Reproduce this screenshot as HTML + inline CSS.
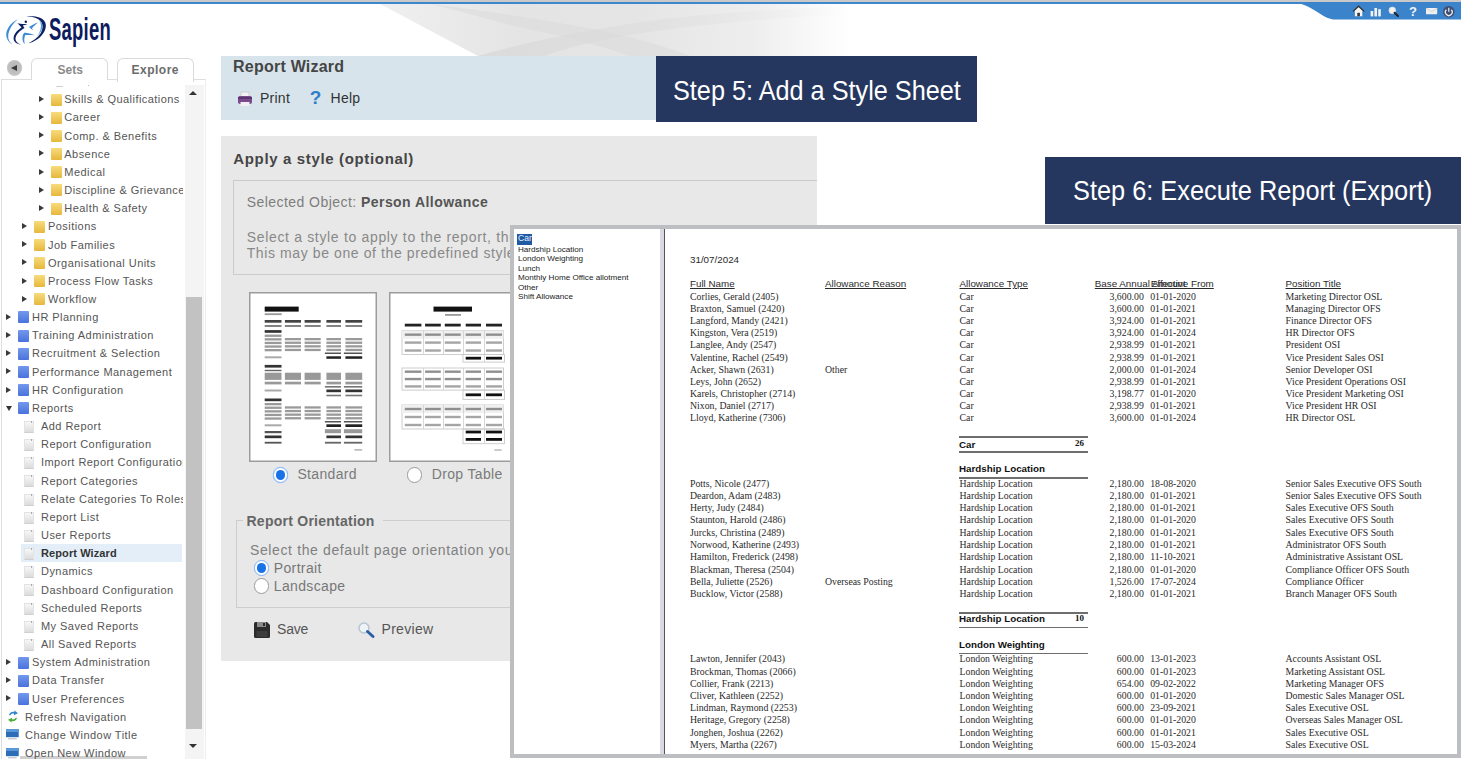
<!DOCTYPE html><html><head><meta charset="utf-8"><style>
*{margin:0;padding:0;box-sizing:border-box}
html,body{width:1461px;height:759px;overflow:hidden;background:#fff;position:relative;font-family:"Liberation Sans",sans-serif}
.a{position:absolute}
.nw{white-space:nowrap}
#topgray{left:0;top:0;width:1461px;height:2px;background:#c9c9c9}
#topblue{left:0;top:2px;width:1461px;height:1.5px;background:#3e87cd}
#swoosh{left:380px;top:3px;width:460px;height:52px;background:linear-gradient(90deg,rgba(255,255,255,0) 0%,#e9e9e9 25%,#e0e0e0 50%,#e8e8e8 72%,rgba(255,255,255,0) 100%)}
#navpanel{left:1px;top:79px;width:204.5px;height:690px;border:1.3px solid #dedede;border-right-color:#ececec;background:#fff}
.tab{top:57.5px;height:23px;border:1.3px solid #dadada;border-bottom:none;border-radius:6px 6px 0 0;background:#fff}
#track{left:184.5px;top:85px;width:19.5px;height:674px;background:#f4f4f4}
#thumb{left:185.5px;top:297px;width:16.5px;height:432px;background:#c2c2c2}
.tr{font-size:11px;color:#555;letter-spacing:.45px;height:18px;line-height:18px;white-space:nowrap;overflow:hidden}
.arr{width:0;height:0;border-left:5px solid #3a3a3a;border-top:3px solid transparent;border-bottom:3px solid transparent}
.arrd{width:0;height:0;border-top:5px solid #333;border-left:3px solid transparent;border-right:3px solid transparent}
.fold{width:11px;height:12px;border-radius:1px}
.fy{background:linear-gradient(#f8db7c,#e6b83c)}
.fb{background:linear-gradient(#7398ee,#4a72dc)}
.doc{width:9.5px;height:12px;background:linear-gradient(#f7f7f7,#dcdcdc);border:.8px solid #e3e3e3;border-bottom-color:#cfcfcf}
#wizhead{left:221px;top:56px;width:596px;height:64.3px;background:#d7e4eb}
#applyp{left:221px;top:136px;width:596px;height:525px;background:#e8e8e8}
.banner{background:#26375f;color:#fff}
.rp{font-family:"Liberation Serif",serif;font-size:9.8px;color:#2a2a2a;white-space:nowrap;line-height:12px;height:12px}
.rs{font-family:"Liberation Sans",sans-serif;font-size:9.8px;color:#2a2a2a;white-space:nowrap;line-height:12px;height:12px}
.li{font-size:8.1px;color:#222;white-space:nowrap;line-height:9.4px}
</style></head><body>
<div class="a" id="topgray"></div><div class="a" id="topblue"></div>
<svg class="a" style="left:370px;top:3.5px" width="480" height="52" viewBox="370 3.5 480 52">
<defs><linearGradient id="sw" x1="0" x2="1" y1="0" y2="0"><stop offset="0" stop-color="#f0f0f0"/><stop offset=".3" stop-color="#e4e4e4"/><stop offset=".55" stop-color="#e5e5e5"/><stop offset=".8" stop-color="#eeeeee"/><stop offset="1" stop-color="#fff"/></linearGradient>
<linearGradient id="swr" x1="0" x2="1" y1="0" y2="0"><stop offset="0" stop-color="#d8d8d8" stop-opacity=".8"/><stop offset=".5" stop-color="#dcdcdc" stop-opacity=".5"/><stop offset="1" stop-color="#e6e6e6" stop-opacity="0"/></linearGradient></defs>
<path d="M380 3.5H850V55.5H478Z" fill="url(#sw)"/>
<path d="M478 55.5C540 38 600 27 660 19C720 12 790 8 850 6V14C790 16 720 22 660 30C610 37 570 46 545 55.5Z" fill="url(#swr)"/>
<path d="M430 3.5C500 12 560 22 610 32C640 39 665 46 690 55.5H630C600 45 570 37 530 29C490 20 460 10 430 3.5Z" fill="#dadada" opacity=".5"/>
</svg>
<svg class="a" style="left:0;top:10px" width="50" height="40" viewBox="0 10 50 40">
<path d="M17.8 19.3C10.5 23 5.2 30 6.4 36.5C7 40 9.5 43 12.6 44.6C9.6 42.5 8 39.5 8.2 36C8.6 29.5 12.8 23.6 17.8 19.3Z" fill="#3d8bd8"/>
<path d="M26.4 16.6C33 15.6 42 16.5 45 22C47.6 27 44 35 37 39.5C34 41.5 31 42.7 28.5 43.3C33 41 38 37.5 40.8 33C44 27.5 43 21.5 37.5 18.8C34.5 17.3 30.5 16.7 26.4 16.6Z" fill="#0e1f63"/>
<path d="M38.5 19.5C43 22 43.5 28 40 33C37.5 36.8 33 40.3 28.5 43.3C33.5 40.5 37.2 37 39.2 33C41.8 27.5 41.5 22.5 38.5 19.5Z" fill="#4a97e0"/>
<path d="M17.5 23.2C19.5 23.8 22 24.2 27.6 24C25.5 24.9 24 25.3 22.8 25.5L24.5 28C20 30.5 15.8 34.5 15.5 38.5C15.3 41 17.5 43.5 21 44.5C16.5 44 13.3 41.5 13.6 38C14 33.8 17.5 30.2 21.5 27.6C20.2 26 18.8 24.5 17.5 23.2Z" fill="#0e1f63"/>
<circle cx="25.8" cy="21.8" r="1.2" fill="#0e1f63"/>
<path d="M29 27C31.5 25.5 35 23.5 38 22.6C35.5 24.5 33.5 26.5 32 28.3L33 30.6C31.6 29.4 30.3 28.2 29 27Z" fill="#3d8bd8"/>
<path d="M34.8 35.3C31 33.6 27 32.6 24.2 32.8C22.3 35 22 38.5 23 41.5C23.3 42.5 24 43.4 24.8 43.9C24 41 24 38 25.3 35C28.5 34.8 31.8 35 34.8 35.3Z" fill="#3d8bd8"/>
</svg>
<div class="a nw" style="left:49.3px;top:13.96px;font-size:31px;line-height:31px;font-weight:bold;color:#0c1c5e;transform:scaleX(.595);transform-origin:0 0;letter-spacing:.4px">Sapien</div>
<svg class="a" style="left:1280px;top:2px" width="181" height="19" viewBox="0 0 181 19"><path d="M0 0H181V17.6H56C48 17.6 42 13 34 8C26 3 20 0.5 10 0.2Z" fill="#3b84cb"/></svg>
<svg class="a" style="left:1350px;top:3px" width="111" height="16" viewBox="0 0 111 16">
<path d="M3.5 8.3L8.6 3.5L13.7 8.3H12.3V13.2H4.9V8.3Z" fill="#f4f4f4"/><path d="M3 8.5L8.6 3.2L14.2 8.5" fill="none" stroke="#333" stroke-width="1.2"/><rect x="7.3" y="9.8" width="2.6" height="3.4" fill="#333"/>
<rect x="20.6" y="8" width="2.6" height="5.4" fill="#f2f2f2"/><rect x="24.4" y="5" width="2.6" height="8.4" fill="#f2f2f2"/><rect x="28.2" y="6.2" width="2.6" height="7.2" fill="#f2f2f2"/>
<circle cx="42.3" cy="7.4" r="3.3" fill="#f2f2f2" stroke="#ddd" stroke-width=".8"/><path d="M44.6 9.7L48 13" stroke="#222" stroke-width="2" stroke-linecap="round"/>
<text x="63" y="13.2" font-family="Liberation Sans" font-size="13" font-weight="bold" fill="#f4f4f4" text-anchor="middle">?</text>
<rect x="76" y="5" width="11.2" height="6.3" rx=".6" fill="#f0f0f0"/><path d="M76 5.3L81.6 8.6L87.2 5.3" fill="none" stroke="#c9c9c9" stroke-width=".8"/>
<circle cx="98.8" cy="8.7" r="5.8" fill="#3d4f74"/><path d="M96.3 6.8A3.4 3.4 0 1 0 101.3 6.8" fill="none" stroke="#eee" stroke-width="1.3"/><rect x="98.2" y="4.8" width="1.2" height="4" fill="#eee"/>
</svg>
<div class="a" id="navpanel"></div>
<div class="a tab" style="left:30.5px;width:77.5px;height:22px"></div>
<div class="a tab" style="left:117px;width:77px;height:24px"></div>
<div class="a nw" style="left:57.5px;top:63.64px;font-size:12px;line-height:12px;font-weight:bold;color:#8a8a8a;letter-spacing:0">Sets</div>
<div class="a nw" style="left:131.5px;top:63.64px;font-size:12px;line-height:12px;font-weight:bold;color:#6b6b6b;letter-spacing:.5px">Explore</div>
<div class="a" style="left:6.5px;top:60.3px;width:15.8px;height:15.8px;border-radius:50%;background:radial-gradient(circle at 50% 45%,#b4b4b4 0,#c0c0c0 55%,#d8d8d8 100%)"></div>
<div class="a" style="left:11px;top:65.2px;width:0;height:0;border-right:6px solid #3a3a3a;border-top:3px solid transparent;border-bottom:3px solid transparent"></div>
<div class="a" id="track"></div><div class="a" id="thumb"></div>
<div class="a" style="left:55.5px;top:85.5px;width:7px;height:1.2px;background:#cfcfcf"></div><div class="a" style="left:88px;top:84.5px;width:1.2px;height:1.2px;background:#bbb"></div>
<div class="a" style="left:189px;top:91px;width:0;height:0;border-bottom:4.5px solid #333;border-left:4.5px solid transparent;border-right:4.5px solid transparent"></div>
<div class="a" style="left:189px;top:744px;width:0;height:0;border-top:4.5px solid #333;border-left:4.5px solid transparent;border-right:4.5px solid transparent"></div>
<div class="a" style="left:20px;top:756px;width:127px;height:3px;background:#d0d0d0"></div>
<div class="a arr" style="left:39px;top:96px"></div>
<div class="a fold fy" style="left:50.6px;top:93.5px"></div>
<div class="a tr" style="left:64.3px;top:90.2px;width:118.7px">Skills &amp; Qualifications</div>
<div class="a arr" style="left:39px;top:114px"></div>
<div class="a fold fy" style="left:50.6px;top:111.7px"></div>
<div class="a tr" style="left:64.3px;top:108.4px;width:118.7px">Career</div>
<div class="a arr" style="left:39px;top:132px"></div>
<div class="a fold fy" style="left:50.6px;top:129.8px"></div>
<div class="a tr" style="left:64.3px;top:126.5px;width:118.7px">Comp. &amp; Benefits</div>
<div class="a arr" style="left:39px;top:150px"></div>
<div class="a fold fy" style="left:50.6px;top:148.0px"></div>
<div class="a tr" style="left:64.3px;top:144.7px;width:118.7px">Absence</div>
<div class="a arr" style="left:39px;top:169px"></div>
<div class="a fold fy" style="left:50.6px;top:166.1px"></div>
<div class="a tr" style="left:64.3px;top:162.8px;width:118.7px">Medical</div>
<div class="a arr" style="left:39px;top:187px"></div>
<div class="a fold fy" style="left:50.6px;top:184.3px"></div>
<div class="a tr" style="left:64.3px;top:181.0px;width:118.7px">Discipline &amp; Grievance</div>
<div class="a arr" style="left:39px;top:205px"></div>
<div class="a fold fy" style="left:50.6px;top:202.5px"></div>
<div class="a tr" style="left:64.3px;top:199.2px;width:118.7px">Health &amp; Safety</div>
<div class="a arr" style="left:22px;top:223px"></div>
<div class="a fold fy" style="left:33.7px;top:220.6px"></div>
<div class="a tr" style="left:48px;top:217.3px;width:135.0px">Positions</div>
<div class="a arr" style="left:22px;top:241px"></div>
<div class="a fold fy" style="left:33.7px;top:238.8px"></div>
<div class="a tr" style="left:48px;top:235.5px;width:135.0px">Job Families</div>
<div class="a arr" style="left:22px;top:259px"></div>
<div class="a fold fy" style="left:33.7px;top:256.9px"></div>
<div class="a tr" style="left:48px;top:253.6px;width:135.0px">Organisational Units</div>
<div class="a arr" style="left:22px;top:278px"></div>
<div class="a fold fy" style="left:33.7px;top:275.1px"></div>
<div class="a tr" style="left:48px;top:271.8px;width:135.0px">Process Flow Tasks</div>
<div class="a arr" style="left:22px;top:296px"></div>
<div class="a fold fy" style="left:33.7px;top:293.3px"></div>
<div class="a tr" style="left:48px;top:290.0px;width:135.0px">Workflow</div>
<div class="a arr" style="left:6px;top:314px"></div>
<div class="a fold fb" style="left:18px;top:311.4px"></div>
<div class="a tr" style="left:32px;top:308.1px;width:151.0px">HR Planning</div>
<div class="a arr" style="left:6px;top:332px"></div>
<div class="a fold fb" style="left:18px;top:329.6px"></div>
<div class="a tr" style="left:32px;top:326.3px;width:151.0px">Training Administration</div>
<div class="a arr" style="left:6px;top:350px"></div>
<div class="a fold fb" style="left:18px;top:347.7px"></div>
<div class="a tr" style="left:32px;top:344.4px;width:151.0px">Recruitment &amp; Selection</div>
<div class="a arr" style="left:6px;top:368px"></div>
<div class="a fold fb" style="left:18px;top:365.9px"></div>
<div class="a tr" style="left:32px;top:362.6px;width:151.0px">Performance Management</div>
<div class="a arr" style="left:6px;top:387px"></div>
<div class="a fold fb" style="left:18px;top:384.1px"></div>
<div class="a tr" style="left:32px;top:380.8px;width:151.0px">HR Configuration</div>
<div class="a arrd" style="left:5.8px;top:405.7px"></div>
<div class="a fold fb" style="left:18px;top:402.2px"></div>
<div class="a tr" style="left:32px;top:398.9px;width:151.0px">Reports</div>
<div class="a doc" style="left:24px;top:420.9px"></div><div class="a" style="left:31px;top:420.9px;width:1.2px;height:2px;background:#aaa"></div>
<div class="a tr" style="left:41px;top:417.1px;width:142.0px">Add Report</div>
<div class="a doc" style="left:24px;top:439.0px"></div><div class="a" style="left:31px;top:439.0px;width:1.2px;height:2px;background:#aaa"></div>
<div class="a tr" style="left:41px;top:435.2px;width:142.0px">Report Configuration</div>
<div class="a doc" style="left:24px;top:457.2px"></div><div class="a" style="left:31px;top:457.2px;width:1.2px;height:2px;background:#aaa"></div>
<div class="a tr" style="left:41px;top:453.4px;width:142.0px">Import Report Configuration</div>
<div class="a doc" style="left:24px;top:475.4px"></div><div class="a" style="left:31px;top:475.4px;width:1.2px;height:2px;background:#aaa"></div>
<div class="a tr" style="left:41px;top:471.6px;width:142.0px">Report Categories</div>
<div class="a doc" style="left:24px;top:493.5px"></div><div class="a" style="left:31px;top:493.5px;width:1.2px;height:2px;background:#aaa"></div>
<div class="a tr" style="left:41px;top:489.7px;width:142.0px">Relate Categories To Roles</div>
<div class="a doc" style="left:24px;top:511.7px"></div><div class="a" style="left:31px;top:511.7px;width:1.2px;height:2px;background:#aaa"></div>
<div class="a tr" style="left:41px;top:507.9px;width:142.0px">Report List</div>
<div class="a doc" style="left:24px;top:529.8px"></div><div class="a" style="left:31px;top:529.8px;width:1.2px;height:2px;background:#aaa"></div>
<div class="a tr" style="left:41px;top:526.0px;width:142.0px">User Reports</div>
<div class="a" style="left:21px;top:544.0px;width:161px;height:18px;background:#e4eef8"></div>
<div class="a doc" style="left:24px;top:548.0px"></div><div class="a" style="left:31px;top:548.0px;width:1.2px;height:2px;background:#aaa"></div>
<div class="a tr" style="left:41px;top:544.2px;width:142.0px;color:#333;font-weight:bold;letter-spacing:.1px">Report Wizard</div>
<div class="a doc" style="left:24px;top:566.2px"></div><div class="a" style="left:31px;top:566.2px;width:1.2px;height:2px;background:#aaa"></div>
<div class="a tr" style="left:41px;top:562.4px;width:142.0px">Dynamics</div>
<div class="a doc" style="left:24px;top:584.3px"></div><div class="a" style="left:31px;top:584.3px;width:1.2px;height:2px;background:#aaa"></div>
<div class="a tr" style="left:41px;top:580.5px;width:142.0px">Dashboard Configuration</div>
<div class="a doc" style="left:24px;top:602.5px"></div><div class="a" style="left:31px;top:602.5px;width:1.2px;height:2px;background:#aaa"></div>
<div class="a tr" style="left:41px;top:598.7px;width:142.0px">Scheduled Reports</div>
<div class="a doc" style="left:24px;top:620.6px"></div><div class="a" style="left:31px;top:620.6px;width:1.2px;height:2px;background:#aaa"></div>
<div class="a tr" style="left:41px;top:616.8px;width:142.0px">My Saved Reports</div>
<div class="a doc" style="left:24px;top:638.8px"></div><div class="a" style="left:31px;top:638.8px;width:1.2px;height:2px;background:#aaa"></div>
<div class="a tr" style="left:41px;top:635.0px;width:142.0px">All Saved Reports</div>
<div class="a arr" style="left:6px;top:659px"></div>
<div class="a fold fb" style="left:18px;top:656.5px"></div>
<div class="a tr" style="left:32px;top:653.2px;width:151.0px">System Administration</div>
<div class="a arr" style="left:6px;top:677px"></div>
<div class="a fold fb" style="left:18px;top:674.6px"></div>
<div class="a tr" style="left:32px;top:671.3px;width:151.0px">Data Transfer</div>
<div class="a arr" style="left:6px;top:695px"></div>
<div class="a fold fb" style="left:18px;top:692.8px"></div>
<div class="a tr" style="left:32px;top:689.5px;width:151.0px">User Preferences</div>
<svg class="a" style="left:7px;top:710.4px" width="12" height="13" viewBox="0 0 12 13"><path d="M2 5.2C2.5 2.5 5 1.2 7.6 2L7.2 0.3L11 3.2L6.8 5.2L7.1 3.7C5.5 3.3 4 3.9 3.4 5.2Z" fill="#2f86c9"/><path d="M10 7.8C9.5 10.5 7 11.8 4.4 11L4.8 12.7L1 9.8L5.2 7.8L4.9 9.3C6.5 9.7 8 9.1 8.6 7.8Z" fill="#4cae3a"/></svg>
<div class="a tr" style="left:25px;top:707.6px;width:158.0px">Refresh Navigation</div>
<svg class="a" style="left:6.3px;top:729.4px" width="13" height="11" viewBox="0 0 13 11"><rect x="0" y="0" width="12.7" height="8.2" fill="#2c6db5"/><rect x="0" y="0" width="12.7" height="3" fill="#5a97d6"/><rect x="2" y="9.3" width="8.7" height="1" fill="#b5b5c5"/></svg>
<div class="a tr" style="left:25px;top:725.8px;width:158.0px">Change Window Title</div>
<svg class="a" style="left:6.3px;top:747.6px" width="13" height="11" viewBox="0 0 13 11"><rect x="0" y="0" width="12.7" height="8.2" fill="#2c6db5"/><rect x="0" y="0" width="12.7" height="3" fill="#5a97d6"/><rect x="2" y="9.3" width="8.7" height="1" fill="#b5b5c5"/></svg>
<div class="a tr" style="left:25px;top:744.0px;width:158.0px">Open New Window</div>
<div class="a" id="wizhead"></div>
<div class="a" id="applyp"></div>
<div class="a banner" style="left:656px;top:56px;width:321px;height:66px"></div>
<div class="a banner" style="left:1045px;top:157px;width:416px;height:67px"></div>
<div class="a nw" style="left:233.1px;top:58.96px;font-size:16px;line-height:16px;font-weight:bold;color:#454545;letter-spacing:.22px">Report Wizard</div>
<svg class="a" style="left:237px;top:91px" width="16" height="16" viewBox="0 0 16 16"><rect x="4" y="1" width="8" height="5" fill="#f4f0f4" stroke="#bbb" stroke-width=".6"/><rect x="1" y="5" width="14" height="8" rx="2" fill="#7a4b8c"/><rect x="1" y="6" width="14" height="2" fill="#5c3570"/><rect x="3.5" y="11" width="9" height="4" fill="#f2eef2"/></svg>
<div class="a nw" style="left:260px;top:90.75px;font-size:14px;line-height:14px;color:#333;letter-spacing:.25px">Print</div>
<div class="a nw" style="left:309px;top:89px;width:13px;height:18px;font:bold 19px/18px 'Liberation Sans',sans-serif;color:#2f7fc8;text-align:center">?</div>
<div class="a nw" style="left:330.6px;top:90.75px;font-size:14px;line-height:14px;color:#333;letter-spacing:.25px">Help</div>
<div class="a nw" style="left:233.3px;top:150.60px;font-size:15px;line-height:15px;font-weight:bold;color:#454545;letter-spacing:.65px">Apply a style (optional)</div>
<div class="a" style="left:232.7px;top:180.3px;width:584.3px;height:94.5px;border:1.5px solid #cbcbcb;border-right:none"></div>
<div class="a nw" style="left:246.7px;top:195.15px;font-size:14px;line-height:14px;color:#7d7d7d;letter-spacing:.45px">Selected Object: <b style="color:#555">Person Allowance</b></div>
<div class="a nw" style="left:246.7px;top:230.15px;font-size:14px;line-height:14px;color:#888;letter-spacing:.67px">Select a style to apply to the report, this is the style sheet that will be applied</div>
<div class="a nw" style="left:246.7px;top:246.45px;font-size:14px;line-height:14px;color:#888;letter-spacing:.6px">This may be one of the predefined styles or a custom style</div>
<svg class="a" style="left:249px;top:292px" width="128" height="170" viewBox="0 0 128 170"><rect x=".75" y=".75" width="126.5" height="168.5" fill="#fff" stroke="#9c9c9c" stroke-width="1.5"/><rect x="15.7" y="14.6" width="34" height="5" fill="#111"/><rect x="15.7" y="21.3" width="17" height="1.8" fill="#999"/><rect x="15.7" y="28" width="16.8" height="2.7" fill="#444"/><rect x="15.7" y="33.2" width="16.8" height="1.6" fill="#666"/><rect x="35.9" y="28" width="16.1" height="2.7" fill="#444"/><rect x="35.9" y="33.2" width="16.1" height="1.6" fill="#666"/><rect x="55.6" y="28" width="16.1" height="2.7" fill="#444"/><rect x="55.6" y="33.2" width="16.1" height="1.6" fill="#666"/><rect x="77.4" y="28" width="14.6" height="2.7" fill="#444"/><rect x="77.4" y="33.2" width="14.6" height="1.6" fill="#666"/><rect x="96.4" y="28" width="16.8" height="2.7" fill="#444"/><rect x="96.4" y="33.2" width="16.8" height="1.6" fill="#666"/><rect x="15.7" y="38.1" width="16.8" height="2.7" fill="#333"/><rect x="15.7" y="42.6" width="16.8" height="2.3" fill="#9a9a9a"/><rect x="15.7" y="46.2" width="16.8" height="2.3" fill="#9a9a9a"/><rect x="15.7" y="49.800000000000004" width="16.8" height="2.3" fill="#9a9a9a"/><rect x="15.7" y="53.400000000000006" width="16.8" height="2.3" fill="#9a9a9a"/><rect x="15.7" y="57.00000000000001" width="16.8" height="2.3" fill="#9a9a9a"/><rect x="35.9" y="46" width="16.1" height="2.3" fill="#9a9a9a"/><rect x="35.9" y="49.6" width="16.1" height="2.3" fill="#9a9a9a"/><rect x="35.9" y="53.2" width="16.1" height="2.3" fill="#9a9a9a"/><rect x="35.9" y="56.800000000000004" width="16.1" height="2.3" fill="#9a9a9a"/><rect x="55.6" y="46" width="16.1" height="2.3" fill="#9a9a9a"/><rect x="55.6" y="49.6" width="16.1" height="2.3" fill="#9a9a9a"/><rect x="55.6" y="53.2" width="16.1" height="2.3" fill="#9a9a9a"/><rect x="55.6" y="56.800000000000004" width="16.1" height="2.3" fill="#9a9a9a"/><rect x="77.4" y="46" width="14.6" height="2.3" fill="#9a9a9a"/><rect x="77.4" y="49.6" width="14.6" height="2.3" fill="#9a9a9a"/><rect x="77.4" y="53.2" width="14.6" height="2.3" fill="#9a9a9a"/><rect x="77.4" y="56.800000000000004" width="14.6" height="2.3" fill="#9a9a9a"/><rect x="75.9" y="60.5" width="16.1" height="1.5" fill="#555"/><rect x="77.4" y="64.3" width="14.6" height="2.5" fill="#222"/><rect x="96.4" y="46" width="16.8" height="2.3" fill="#9a9a9a"/><rect x="96.4" y="49.6" width="16.8" height="2.3" fill="#9a9a9a"/><rect x="96.4" y="53.2" width="16.8" height="2.3" fill="#9a9a9a"/><rect x="96.4" y="56.800000000000004" width="16.8" height="2.3" fill="#9a9a9a"/><rect x="94.9" y="60.5" width="18.3" height="1.5" fill="#555"/><rect x="96.4" y="64.3" width="16.8" height="2.5" fill="#222"/><rect x="15.7" y="64.3" width="16.8" height="2" fill="#aaa"/><rect x="15.7" y="72.9" width="16.8" height="2.7" fill="#333"/><rect x="15.7" y="77.8" width="16.8" height="1.4" fill="#666"/><rect x="15.7" y="80.7" width="16.8" height="7.2" fill="#999"/><rect x="15.7" y="89.7" width="16.8" height="2.7" fill="#999"/><rect x="35.9" y="80.7" width="16.1" height="7.2" fill="#999"/><rect x="35.9" y="89.7" width="16.1" height="2.7" fill="#999"/><rect x="55.6" y="80.7" width="16.1" height="7.2" fill="#999"/><rect x="55.6" y="89.7" width="16.1" height="2.7" fill="#999"/><rect x="77.4" y="80.7" width="14.6" height="7.2" fill="#999"/><rect x="77.4" y="89.7" width="14.6" height="2.7" fill="#999"/><rect x="96.4" y="80.7" width="16.8" height="7.2" fill="#999"/><rect x="96.4" y="89.7" width="16.8" height="2.7" fill="#999"/><rect x="75.9" y="94.2" width="16.1" height="1.3" fill="#555"/><rect x="77.4" y="97.5" width="14.6" height="2.7" fill="#333"/><rect x="77.4" y="102.7" width="14.6" height="1.6" fill="#777"/><rect x="94.9" y="94.2" width="18.3" height="1.3" fill="#555"/><rect x="96.4" y="97.5" width="16.8" height="2.7" fill="#333"/><rect x="96.4" y="102.7" width="16.8" height="1.6" fill="#777"/><rect x="15.7" y="97.5" width="16.8" height="2" fill="#aaa"/><rect x="15.7" y="106.5" width="16.8" height="2.7" fill="#333"/><rect x="15.7" y="111" width="16.8" height="2.3" fill="#9a9a9a"/><rect x="15.7" y="114.6" width="16.8" height="2.3" fill="#9a9a9a"/><rect x="15.7" y="118.19999999999999" width="16.8" height="2.3" fill="#9a9a9a"/><rect x="15.7" y="121.79999999999998" width="16.8" height="2.3" fill="#9a9a9a"/><rect x="15.7" y="125.39999999999998" width="16.8" height="2.3" fill="#9a9a9a"/><rect x="35.9" y="114.3" width="16.1" height="2.3" fill="#9a9a9a"/><rect x="35.9" y="117.89999999999999" width="16.1" height="2.3" fill="#9a9a9a"/><rect x="35.9" y="121.49999999999999" width="16.1" height="2.3" fill="#9a9a9a"/><rect x="35.9" y="125.09999999999998" width="16.1" height="2.3" fill="#9a9a9a"/><rect x="55.6" y="114.3" width="16.1" height="2.3" fill="#9a9a9a"/><rect x="55.6" y="117.89999999999999" width="16.1" height="2.3" fill="#9a9a9a"/><rect x="55.6" y="121.49999999999999" width="16.1" height="2.3" fill="#9a9a9a"/><rect x="55.6" y="125.09999999999998" width="16.1" height="2.3" fill="#9a9a9a"/><rect x="77.4" y="114.3" width="14.6" height="2.3" fill="#9a9a9a"/><rect x="77.4" y="117.89999999999999" width="14.6" height="2.3" fill="#9a9a9a"/><rect x="77.4" y="121.49999999999999" width="14.6" height="2.3" fill="#9a9a9a"/><rect x="77.4" y="125.09999999999998" width="14.6" height="2.3" fill="#9a9a9a"/><rect x="75.9" y="129" width="16.1" height="1.5" fill="#555"/><rect x="77.4" y="132.3" width="14.6" height="2.7" fill="#222"/><rect x="75.9" y="137.2" width="16.1" height="4" fill="#999"/><rect x="77.4" y="143.5" width="14.6" height="2.7" fill="#333"/><rect x="75.9" y="149.8" width="16.1" height="1.8" fill="#666"/><rect x="96.4" y="114.3" width="16.8" height="2.3" fill="#9a9a9a"/><rect x="96.4" y="117.89999999999999" width="16.8" height="2.3" fill="#9a9a9a"/><rect x="96.4" y="121.49999999999999" width="16.8" height="2.3" fill="#9a9a9a"/><rect x="96.4" y="125.09999999999998" width="16.8" height="2.3" fill="#9a9a9a"/><rect x="94.9" y="129" width="18.3" height="1.5" fill="#555"/><rect x="96.4" y="132.3" width="16.8" height="2.7" fill="#222"/><rect x="94.9" y="137.2" width="18.3" height="4" fill="#999"/><rect x="96.4" y="143.5" width="16.8" height="2.7" fill="#333"/><rect x="94.9" y="149.8" width="18.3" height="1.8" fill="#666"/><rect x="15.7" y="132.3" width="16.8" height="2" fill="#aaa"/><rect x="15.7" y="139" width="16.8" height="2.2" fill="#555"/><rect x="15.7" y="143.5" width="16.8" height="2.7" fill="#333"/><rect x="15.7" y="149.8" width="16.8" height="1.8" fill="#555"/><rect x="105.4" y="157" width="7.8" height="1.7" fill="#bbb"/></svg>
<svg class="a" style="left:389px;top:292px" width="128" height="170" viewBox="0 0 128 170"><rect x=".75" y=".75" width="126.5" height="168.5" fill="#fff" stroke="#9c9c9c" stroke-width="1.5"/><rect x="44.5" y="14.6" width="38.5" height="5" fill="#111"/><rect x="56" y="22" width="16" height="1.8" fill="#999"/><rect x="15.8" y="31.7" width="16.6" height="2.8" fill="#222"/><rect x="36.1" y="31.7" width="15.7" height="2.8" fill="#222"/><rect x="55.8" y="31.7" width="15.9" height="2.8" fill="#222"/><rect x="76.7" y="31.7" width="15.3" height="2.8" fill="#222"/><rect x="97" y="31.7" width="16" height="2.8" fill="#222"/><rect x="13" y="38.7" width="101.5" height="23.79" fill="none" stroke="#c8c8c8" stroke-width=".9"/><rect x="13" y="38.7" width="101.5" height="7.93" fill="#f0f0f0"/><rect x="15.8" y="41.465" width="16.6" height="2.4" fill="#8f8f8f"/><rect x="36.1" y="41.465" width="15.7" height="2.4" fill="#8f8f8f"/><rect x="55.8" y="41.465" width="15.9" height="2.4" fill="#8f8f8f"/><rect x="76.7" y="41.465" width="15.3" height="2.4" fill="#8f8f8f"/><rect x="97" y="41.465" width="16" height="2.4" fill="#8f8f8f"/><rect x="15.8" y="49.394999999999996" width="16.6" height="2.4" fill="#a5a5a5"/><rect x="36.1" y="49.394999999999996" width="15.7" height="2.4" fill="#a5a5a5"/><rect x="55.8" y="49.394999999999996" width="15.9" height="2.4" fill="#a5a5a5"/><rect x="76.7" y="49.394999999999996" width="15.3" height="2.4" fill="#a5a5a5"/><rect x="97" y="49.394999999999996" width="16" height="2.4" fill="#a5a5a5"/><rect x="15.8" y="57.325" width="16.6" height="2.4" fill="#a5a5a5"/><rect x="36.1" y="57.325" width="15.7" height="2.4" fill="#a5a5a5"/><rect x="55.8" y="57.325" width="15.9" height="2.4" fill="#a5a5a5"/><rect x="76.7" y="57.325" width="15.3" height="2.4" fill="#a5a5a5"/><rect x="97" y="57.325" width="16" height="2.4" fill="#a5a5a5"/><rect x="34" y="38.7" width="0.8" height="23.79" fill="#cfcfcf"/><rect x="54" y="38.7" width="0.8" height="23.79" fill="#cfcfcf"/><rect x="74" y="38.7" width="0.8" height="23.79" fill="#cfcfcf"/><rect x="95" y="38.7" width="0.8" height="23.79" fill="#cfcfcf"/><rect x="74" y="62.49" width="41.5" height="7.6" fill="none" stroke="#c8c8c8" stroke-width=".9"/><rect x="95" y="62.49" width="0.8" height="7.6" fill="#cfcfcf"/><rect x="76.7" y="64.78999999999999" width="15.3" height="2.8" fill="#111"/><rect x="97" y="64.78999999999999" width="16" height="2.8" fill="#111"/><rect x="13" y="76.0" width="101.5" height="22.11" fill="none" stroke="#c8c8c8" stroke-width=".9"/><rect x="15.8" y="78.485" width="16.6" height="2.4" fill="#8f8f8f"/><rect x="36.1" y="78.485" width="15.7" height="2.4" fill="#8f8f8f"/><rect x="55.8" y="78.485" width="15.9" height="2.4" fill="#8f8f8f"/><rect x="76.7" y="78.485" width="15.3" height="2.4" fill="#8f8f8f"/><rect x="97" y="78.485" width="16" height="2.4" fill="#8f8f8f"/><rect x="15.8" y="85.855" width="16.6" height="2.4" fill="#8f8f8f"/><rect x="36.1" y="85.855" width="15.7" height="2.4" fill="#8f8f8f"/><rect x="55.8" y="85.855" width="15.9" height="2.4" fill="#8f8f8f"/><rect x="76.7" y="85.855" width="15.3" height="2.4" fill="#8f8f8f"/><rect x="97" y="85.855" width="16" height="2.4" fill="#8f8f8f"/><rect x="15.8" y="93.225" width="16.6" height="2.4" fill="#a5a5a5"/><rect x="36.1" y="93.225" width="15.7" height="2.4" fill="#a5a5a5"/><rect x="55.8" y="93.225" width="15.9" height="2.4" fill="#a5a5a5"/><rect x="76.7" y="93.225" width="15.3" height="2.4" fill="#a5a5a5"/><rect x="97" y="93.225" width="16" height="2.4" fill="#a5a5a5"/><rect x="34" y="76.0" width="0.8" height="22.11" fill="#cfcfcf"/><rect x="54" y="76.0" width="0.8" height="22.11" fill="#cfcfcf"/><rect x="74" y="76.0" width="0.8" height="22.11" fill="#cfcfcf"/><rect x="95" y="76.0" width="0.8" height="22.11" fill="#cfcfcf"/><rect x="74" y="98.11" width="41.5" height="9.3" fill="none" stroke="#c8c8c8" stroke-width=".9"/><rect x="95" y="98.11" width="0.8" height="9.3" fill="#cfcfcf"/><rect x="76.7" y="101.41" width="15.3" height="2.8" fill="#111"/><rect x="97" y="101.41" width="16" height="2.8" fill="#111"/><rect x="13" y="113.0" width="101.5" height="24.0" fill="none" stroke="#c8c8c8" stroke-width=".9"/><rect x="13" y="113.0" width="101.5" height="8.0" fill="#f0f0f0"/><rect x="15.8" y="115.8" width="16.6" height="2.4" fill="#8f8f8f"/><rect x="36.1" y="115.8" width="15.7" height="2.4" fill="#8f8f8f"/><rect x="55.8" y="115.8" width="15.9" height="2.4" fill="#8f8f8f"/><rect x="76.7" y="115.8" width="15.3" height="2.4" fill="#8f8f8f"/><rect x="97" y="115.8" width="16" height="2.4" fill="#8f8f8f"/><rect x="15.8" y="123.8" width="16.6" height="2.4" fill="#a5a5a5"/><rect x="36.1" y="123.8" width="15.7" height="2.4" fill="#a5a5a5"/><rect x="55.8" y="123.8" width="15.9" height="2.4" fill="#a5a5a5"/><rect x="76.7" y="123.8" width="15.3" height="2.4" fill="#a5a5a5"/><rect x="97" y="123.8" width="16" height="2.4" fill="#a5a5a5"/><rect x="15.8" y="131.8" width="16.6" height="2.4" fill="#a5a5a5"/><rect x="36.1" y="131.8" width="15.7" height="2.4" fill="#a5a5a5"/><rect x="55.8" y="131.8" width="15.9" height="2.4" fill="#a5a5a5"/><rect x="76.7" y="131.8" width="15.3" height="2.4" fill="#a5a5a5"/><rect x="97" y="131.8" width="16" height="2.4" fill="#a5a5a5"/><rect x="34" y="113.0" width="0.8" height="24.0" fill="#cfcfcf"/><rect x="54" y="113.0" width="0.8" height="24.0" fill="#cfcfcf"/><rect x="74" y="113.0" width="0.8" height="24.0" fill="#cfcfcf"/><rect x="95" y="113.0" width="0.8" height="24.0" fill="#cfcfcf"/><rect x="74" y="137.0" width="41.5" height="14.7" fill="none" stroke="#c8c8c8" stroke-width=".9"/><rect x="95" y="137.0" width="0.8" height="14.7" fill="#cfcfcf"/><rect x="76.7" y="138.6" width="15.3" height="2.8" fill="#111"/><rect x="97" y="138.6" width="16" height="2.8" fill="#111"/><rect x="76.7" y="146.0" width="15.3" height="2.8" fill="#111"/><rect x="97" y="146.0" width="16" height="2.8" fill="#111"/><rect x="105.3" y="157.3" width="7.4" height="1.5" fill="#bbb"/></svg>
<div class="a" style="left:272.5px;top:467px;width:15.5px;height:15.5px;border-radius:50%;background:#fff;border:1.5px solid #7fb0ee;box-shadow:0 0 0 .5px #cfe0f7"></div>
<div class="a" style="left:275.5px;top:470px;width:9.5px;height:9.5px;border-radius:50%;background:#1b72e6"></div>
<div class="a nw" style="left:297.4px;top:467.15px;font-size:14px;line-height:14px;color:#7a7a7a;letter-spacing:.35px">Standard</div>
<div class="a" style="left:406.8px;top:467px;width:15.5px;height:15.5px;border-radius:50%;background:#fff;border:1.5px solid #9a9a9a"></div>
<div class="a nw" style="left:431.7px;top:467.15px;font-size:14px;line-height:14px;color:#7a7a7a;letter-spacing:.35px">Drop Table</div>
<div class="a" style="left:236.3px;top:520.4px;width:580.7px;height:88px;border:1.2px solid #cdcdcd;border-right:none"></div>
<div class="a" style="left:243px;top:512px;width:140px;height:16px;background:#e8e8e8"></div>
<div class="a nw" style="left:246.5px;top:514.15px;font-size:14px;line-height:14px;font-weight:bold;color:#666;letter-spacing:.25px">Report Orientation</div>
<div class="a nw" style="left:250px;top:542.65px;font-size:14px;line-height:14px;color:#808080;letter-spacing:.62px">Select the default page orientation you want the report to use</div>
<div class="a" style="left:253.5px;top:560px;width:15.5px;height:15.5px;border-radius:50%;background:#fff;border:1.5px solid #7fb0ee"></div>
<div class="a" style="left:256.5px;top:563px;width:9.5px;height:9.5px;border-radius:50%;background:#1b72e6"></div>
<div class="a nw" style="left:273.8px;top:561.15px;font-size:14px;line-height:14px;color:#777;letter-spacing:.35px">Portrait</div>
<div class="a" style="left:253.5px;top:578.3px;width:15.5px;height:15.5px;border-radius:50%;background:#fff;border:1.5px solid #9a9a9a"></div>
<div class="a nw" style="left:273.8px;top:579.15px;font-size:14px;line-height:14px;color:#777;letter-spacing:.35px">Landscape</div>
<svg class="a" style="left:254px;top:622px" width="16" height="16" viewBox="0 0 16 16"><path d="M0 1.5Q0 0 1.5 0H13L16 3V14.5Q16 16 14.5 16H1.5Q0 16 0 14.5Z" fill="#2b2b2b"/><rect x="3" y="0" width="9" height="5" fill="#8a8a8a"/><rect x="9" y="1" width="2" height="3" fill="#2b2b2b"/><rect x="2.5" y="9" width="11" height="6" fill="#3c3c3c"/></svg>
<div class="a nw" style="left:277px;top:621.65px;font-size:14px;line-height:14px;color:#555;letter-spacing:-.2px">Save</div>
<svg class="a" style="left:357px;top:620px" width="19" height="19" viewBox="0 0 19 19"><circle cx="7" cy="8" r="5" fill="#eef3f8" stroke="#b9c4cf" stroke-width="1.5"/><path d="M10.5 11.5L16 16.5" stroke="#2a5fa8" stroke-width="3" stroke-linecap="round"/></svg>
<div class="a nw" style="left:381.5px;top:621.65px;font-size:14px;line-height:14px;color:#555;letter-spacing:.3px">Preview</div>
<div class="a nw" style="left:673.3px;top:75.77px;font-size:28.5px;line-height:28.5px;color:#fff;transform:scaleX(.886);transform-origin:0 0">Step 5: Add a Style Sheet</div>
<div class="a nw" style="left:1072.8px;top:176.27px;font-size:28.5px;line-height:28.5px;color:#fff;transform:scaleX(.889);transform-origin:0 0">Step 6: Execute Report (Export)</div>
<div class="a" style="left:510px;top:225px;width:951px;height:533px;background:#bdbec2"></div>
<div class="a" style="left:514px;top:229px;width:146px;height:525px;background:#fff"></div>
<div class="a" style="left:660px;top:229px;width:3.5px;height:525px;background:#d9d9e3"></div>
<div class="a" style="left:663.5px;top:229px;width:1.5px;height:525px;background:#555"></div>
<div class="a" style="left:665px;top:229px;width:791.5px;height:525px;background:#fff"></div>
<div class="a" style="left:517.2px;top:234.2px;width:14.6px;height:10.4px;background:#1f5aa3"></div>
<div class="a nw" style="left:518px;top:233.93px;font-size:9.3px;line-height:9.3px;color:#e8f0ff;transform:scaleX(.92);transform-origin:0 0">Car</div>
<div class="a li" style="left:518px;top:245.0px">Hardship Location</div>
<div class="a li" style="left:518px;top:254.4px">London Weighting</div>
<div class="a li" style="left:518px;top:263.8px">Lunch</div>
<div class="a li" style="left:518px;top:273.2px">Monthly Home Office allotment</div>
<div class="a li" style="left:518px;top:282.6px">Other</div>
<div class="a li" style="left:518px;top:292.0px">Shift Allowance</div>
<div class="a rs" style="left:690px;top:254.20px;">31/07/2024</div>
<div class="a rs" style="left:690px;top:278.10px;text-decoration:underline">Full Name</div>
<div class="a rs" style="left:825px;top:278.10px;text-decoration:underline">Allowance Reason</div>
<div class="a rs" style="left:959.5px;top:278.10px;text-decoration:underline">Allowance Type</div>
<div class="a rs" style="left:1094.8px;top:278.10px;text-decoration:underline">Base Annual Amount</div>
<div class="a rs" style="left:1150.8px;top:278.10px;text-decoration:underline">Effective From</div>
<div class="a rs" style="left:1285.5px;top:278.10px;text-decoration:underline">Position Title</div>
<div class="a rp" style="left:690px;top:290.79px;">Corlies, Gerald (2405)</div>
<div class="a rp" style="left:959.5px;top:290.79px;">Car</div>
<div class="a rp" style="left:1063.8px;width:80px;text-align:right;top:290.79px">3,600.00</div>
<div class="a rp" style="left:1150.2px;top:290.79px;">01-01-2020</div>
<div class="a rp" style="left:1285.5px;top:290.79px;">Marketing Director OSL</div>
<div class="a rp" style="left:690px;top:302.96px;">Braxton, Samuel (2420)</div>
<div class="a rp" style="left:959.5px;top:302.96px;">Car</div>
<div class="a rp" style="left:1063.8px;width:80px;text-align:right;top:302.96px">3,600.00</div>
<div class="a rp" style="left:1150.2px;top:302.96px;">01-01-2021</div>
<div class="a rp" style="left:1285.5px;top:302.96px;">Managing Director OFS</div>
<div class="a rp" style="left:690px;top:315.13px;">Langford, Mandy (2421)</div>
<div class="a rp" style="left:959.5px;top:315.13px;">Car</div>
<div class="a rp" style="left:1063.8px;width:80px;text-align:right;top:315.13px">3,924.00</div>
<div class="a rp" style="left:1150.2px;top:315.13px;">01-01-2021</div>
<div class="a rp" style="left:1285.5px;top:315.13px;">Finance Director OFS</div>
<div class="a rp" style="left:690px;top:327.30px;">Kingston, Vera (2519)</div>
<div class="a rp" style="left:959.5px;top:327.30px;">Car</div>
<div class="a rp" style="left:1063.8px;width:80px;text-align:right;top:327.30px">3,924.00</div>
<div class="a rp" style="left:1150.2px;top:327.30px;">01-01-2024</div>
<div class="a rp" style="left:1285.5px;top:327.30px;">HR Director OFS</div>
<div class="a rp" style="left:690px;top:339.47px;">Langlee, Andy (2547)</div>
<div class="a rp" style="left:959.5px;top:339.47px;">Car</div>
<div class="a rp" style="left:1063.8px;width:80px;text-align:right;top:339.47px">2,938.99</div>
<div class="a rp" style="left:1150.2px;top:339.47px;">01-01-2021</div>
<div class="a rp" style="left:1285.5px;top:339.47px;">President OSI</div>
<div class="a rp" style="left:690px;top:351.64px;">Valentine, Rachel (2549)</div>
<div class="a rp" style="left:959.5px;top:351.64px;">Car</div>
<div class="a rp" style="left:1063.8px;width:80px;text-align:right;top:351.64px">2,938.99</div>
<div class="a rp" style="left:1150.2px;top:351.64px;">01-01-2021</div>
<div class="a rp" style="left:1285.5px;top:351.64px;">Vice President Sales OSI</div>
<div class="a rp" style="left:690px;top:363.81px;">Acker, Shawn (2631)</div>
<div class="a rp" style="left:825px;top:363.81px;">Other</div>
<div class="a rp" style="left:959.5px;top:363.81px;">Car</div>
<div class="a rp" style="left:1063.8px;width:80px;text-align:right;top:363.81px">2,000.00</div>
<div class="a rp" style="left:1150.2px;top:363.81px;">01-01-2024</div>
<div class="a rp" style="left:1285.5px;top:363.81px;">Senior Developer OSI</div>
<div class="a rp" style="left:690px;top:375.98px;">Leys, John (2652)</div>
<div class="a rp" style="left:959.5px;top:375.98px;">Car</div>
<div class="a rp" style="left:1063.8px;width:80px;text-align:right;top:375.98px">2,938.99</div>
<div class="a rp" style="left:1150.2px;top:375.98px;">01-01-2021</div>
<div class="a rp" style="left:1285.5px;top:375.98px;">Vice President Operations OSI</div>
<div class="a rp" style="left:690px;top:388.15px;">Karels, Christopher (2714)</div>
<div class="a rp" style="left:959.5px;top:388.15px;">Car</div>
<div class="a rp" style="left:1063.8px;width:80px;text-align:right;top:388.15px">3,198.77</div>
<div class="a rp" style="left:1150.2px;top:388.15px;">01-01-2020</div>
<div class="a rp" style="left:1285.5px;top:388.15px;">Vice President Marketing OSI</div>
<div class="a rp" style="left:690px;top:400.32px;">Nixon, Daniel (2717)</div>
<div class="a rp" style="left:959.5px;top:400.32px;">Car</div>
<div class="a rp" style="left:1063.8px;width:80px;text-align:right;top:400.32px">2,938.99</div>
<div class="a rp" style="left:1150.2px;top:400.32px;">01-01-2021</div>
<div class="a rp" style="left:1285.5px;top:400.32px;">Vice President HR OSI</div>
<div class="a rp" style="left:690px;top:412.49px;">Lloyd, Katherine (7306)</div>
<div class="a rp" style="left:959.5px;top:412.49px;">Car</div>
<div class="a rp" style="left:1063.8px;width:80px;text-align:right;top:412.49px">3,600.00</div>
<div class="a rp" style="left:1150.2px;top:412.49px;">01-01-2024</div>
<div class="a rp" style="left:1285.5px;top:412.49px;">HR Director OSL</div>
<div class="a rp" style="left:690px;top:477.69px;">Potts, Nicole (2477)</div>
<div class="a rp" style="left:959.5px;top:477.69px;">Hardship Location</div>
<div class="a rp" style="left:1063.8px;width:80px;text-align:right;top:477.69px">2,180.00</div>
<div class="a rp" style="left:1150.2px;top:477.69px;">18-08-2020</div>
<div class="a rp" style="left:1285.5px;top:477.69px;">Senior Sales Executive OFS South</div>
<div class="a rp" style="left:690px;top:489.95px;">Deardon, Adam (2483)</div>
<div class="a rp" style="left:959.5px;top:489.95px;">Hardship Location</div>
<div class="a rp" style="left:1063.8px;width:80px;text-align:right;top:489.95px">2,180.00</div>
<div class="a rp" style="left:1150.2px;top:489.95px;">01-01-2021</div>
<div class="a rp" style="left:1285.5px;top:489.95px;">Senior Sales Executive OFS South</div>
<div class="a rp" style="left:690px;top:502.21px;">Herty, Judy (2484)</div>
<div class="a rp" style="left:959.5px;top:502.21px;">Hardship Location</div>
<div class="a rp" style="left:1063.8px;width:80px;text-align:right;top:502.21px">2,180.00</div>
<div class="a rp" style="left:1150.2px;top:502.21px;">01-01-2021</div>
<div class="a rp" style="left:1285.5px;top:502.21px;">Sales Executive OFS South</div>
<div class="a rp" style="left:690px;top:514.47px;">Staunton, Harold (2486)</div>
<div class="a rp" style="left:959.5px;top:514.47px;">Hardship Location</div>
<div class="a rp" style="left:1063.8px;width:80px;text-align:right;top:514.47px">2,180.00</div>
<div class="a rp" style="left:1150.2px;top:514.47px;">01-01-2020</div>
<div class="a rp" style="left:1285.5px;top:514.47px;">Sales Executive OFS South</div>
<div class="a rp" style="left:690px;top:526.73px;">Jurcks, Christina (2489)</div>
<div class="a rp" style="left:959.5px;top:526.73px;">Hardship Location</div>
<div class="a rp" style="left:1063.8px;width:80px;text-align:right;top:526.73px">2,180.00</div>
<div class="a rp" style="left:1150.2px;top:526.73px;">01-01-2021</div>
<div class="a rp" style="left:1285.5px;top:526.73px;">Sales Executive OFS South</div>
<div class="a rp" style="left:690px;top:538.99px;">Norwood, Katherine (2493)</div>
<div class="a rp" style="left:959.5px;top:538.99px;">Hardship Location</div>
<div class="a rp" style="left:1063.8px;width:80px;text-align:right;top:538.99px">2,180.00</div>
<div class="a rp" style="left:1150.2px;top:538.99px;">01-01-2021</div>
<div class="a rp" style="left:1285.5px;top:538.99px;">Administrator OFS South</div>
<div class="a rp" style="left:690px;top:551.25px;">Hamilton, Frederick (2498)</div>
<div class="a rp" style="left:959.5px;top:551.25px;">Hardship Location</div>
<div class="a rp" style="left:1063.8px;width:80px;text-align:right;top:551.25px">2,180.00</div>
<div class="a rp" style="left:1150.2px;top:551.25px;">11-10-2021</div>
<div class="a rp" style="left:1285.5px;top:551.25px;">Administrative Assistant OSL</div>
<div class="a rp" style="left:690px;top:563.51px;">Blackman, Theresa (2504)</div>
<div class="a rp" style="left:959.5px;top:563.51px;">Hardship Location</div>
<div class="a rp" style="left:1063.8px;width:80px;text-align:right;top:563.51px">2,180.00</div>
<div class="a rp" style="left:1150.2px;top:563.51px;">01-01-2020</div>
<div class="a rp" style="left:1285.5px;top:563.51px;">Compliance Officer OFS South</div>
<div class="a rp" style="left:690px;top:575.77px;">Bella, Juliette (2526)</div>
<div class="a rp" style="left:825px;top:575.77px;">Overseas Posting</div>
<div class="a rp" style="left:959.5px;top:575.77px;">Hardship Location</div>
<div class="a rp" style="left:1063.8px;width:80px;text-align:right;top:575.77px">1,526.00</div>
<div class="a rp" style="left:1150.2px;top:575.77px;">17-07-2024</div>
<div class="a rp" style="left:1285.5px;top:575.77px;">Compliance Officer</div>
<div class="a rp" style="left:690px;top:588.03px;">Bucklow, Victor (2588)</div>
<div class="a rp" style="left:959.5px;top:588.03px;">Hardship Location</div>
<div class="a rp" style="left:1063.8px;width:80px;text-align:right;top:588.03px">2,180.00</div>
<div class="a rp" style="left:1150.2px;top:588.03px;">01-01-2021</div>
<div class="a rp" style="left:1285.5px;top:588.03px;">Branch Manager OFS South</div>
<div class="a rp" style="left:690px;top:653.39px;">Lawton, Jennifer (2043)</div>
<div class="a rp" style="left:959.5px;top:653.39px;">London Weighting</div>
<div class="a rp" style="left:1063.8px;width:80px;text-align:right;top:653.39px">600.00</div>
<div class="a rp" style="left:1150.2px;top:653.39px;">13-01-2023</div>
<div class="a rp" style="left:1285.5px;top:653.39px;">Accounts Assistant OSL</div>
<div class="a rp" style="left:690px;top:665.60px;">Brockman, Thomas (2066)</div>
<div class="a rp" style="left:959.5px;top:665.60px;">London Weighting</div>
<div class="a rp" style="left:1063.8px;width:80px;text-align:right;top:665.60px">600.00</div>
<div class="a rp" style="left:1150.2px;top:665.60px;">01-01-2023</div>
<div class="a rp" style="left:1285.5px;top:665.60px;">Marketing Assistant OSL</div>
<div class="a rp" style="left:690px;top:677.81px;">Collier, Frank (2213)</div>
<div class="a rp" style="left:959.5px;top:677.81px;">London Weighting</div>
<div class="a rp" style="left:1063.8px;width:80px;text-align:right;top:677.81px">654.00</div>
<div class="a rp" style="left:1150.2px;top:677.81px;">09-02-2022</div>
<div class="a rp" style="left:1285.5px;top:677.81px;">Marketing Manager OFS</div>
<div class="a rp" style="left:690px;top:690.02px;">Cliver, Kathleen (2252)</div>
<div class="a rp" style="left:959.5px;top:690.02px;">London Weighting</div>
<div class="a rp" style="left:1063.8px;width:80px;text-align:right;top:690.02px">600.00</div>
<div class="a rp" style="left:1150.2px;top:690.02px;">01-01-2020</div>
<div class="a rp" style="left:1285.5px;top:690.02px;">Domestic Sales Manager OSL</div>
<div class="a rp" style="left:690px;top:702.23px;">Lindman, Raymond (2253)</div>
<div class="a rp" style="left:959.5px;top:702.23px;">London Weighting</div>
<div class="a rp" style="left:1063.8px;width:80px;text-align:right;top:702.23px">600.00</div>
<div class="a rp" style="left:1150.2px;top:702.23px;">23-09-2021</div>
<div class="a rp" style="left:1285.5px;top:702.23px;">Sales Executive OSL</div>
<div class="a rp" style="left:690px;top:714.44px;">Heritage, Gregory (2258)</div>
<div class="a rp" style="left:959.5px;top:714.44px;">London Weighting</div>
<div class="a rp" style="left:1063.8px;width:80px;text-align:right;top:714.44px">600.00</div>
<div class="a rp" style="left:1150.2px;top:714.44px;">01-01-2020</div>
<div class="a rp" style="left:1285.5px;top:714.44px;">Overseas Sales Manager OSL</div>
<div class="a rp" style="left:690px;top:726.65px;">Jonghen, Joshua (2262)</div>
<div class="a rp" style="left:959.5px;top:726.65px;">London Weighting</div>
<div class="a rp" style="left:1063.8px;width:80px;text-align:right;top:726.65px">600.00</div>
<div class="a rp" style="left:1150.2px;top:726.65px;">01-01-2021</div>
<div class="a rp" style="left:1285.5px;top:726.65px;">Sales Executive OSL</div>
<div class="a rp" style="left:690px;top:738.86px;">Myers, Martha (2267)</div>
<div class="a rp" style="left:959.5px;top:738.86px;">London Weighting</div>
<div class="a rp" style="left:1063.8px;width:80px;text-align:right;top:738.86px">600.00</div>
<div class="a rp" style="left:1150.2px;top:738.86px;">15-03-2024</div>
<div class="a rp" style="left:1285.5px;top:738.86px;">Sales Executive OSL</div>
<div class="a" style="left:959px;top:436.45px;width:129px;height:1.6px;background:#6e6e6e"></div>
<div class="a rs" style="left:959px;top:438.60px;font-weight:bold;color:#111">Car</div>
<div class="a rp" style="left:1004px;width:80px;text-align:right;top:437.49px;font-weight:bold;color:#111;font-size:9px">26</div>
<div class="a" style="left:959px;top:451.05px;width:129px;height:1.6px;background:#6e6e6e"></div>
<div class="a rs" style="left:959px;top:463.20px;font-weight:bold;color:#111">Hardship Location</div>
<div class="a" style="left:959px;top:477.05px;width:129px;height:1.6px;background:#6e6e6e"></div>
<div class="a" style="left:959px;top:612.15px;width:129px;height:1.6px;background:#6e6e6e"></div>
<div class="a rs" style="left:959px;top:613.40px;font-weight:bold;color:#111">Hardship Location</div>
<div class="a rp" style="left:1004px;width:80px;text-align:right;top:612.29px;font-weight:bold;color:#111;font-size:9px">10</div>
<div class="a" style="left:959px;top:626.75px;width:129px;height:1.6px;background:#6e6e6e"></div>
<div class="a rs" style="left:959px;top:639.20px;font-weight:bold;color:#111">London Weighting</div>
<div class="a" style="left:959px;top:652.85px;width:129px;height:1.6px;background:#6e6e6e"></div>
</body></html>
